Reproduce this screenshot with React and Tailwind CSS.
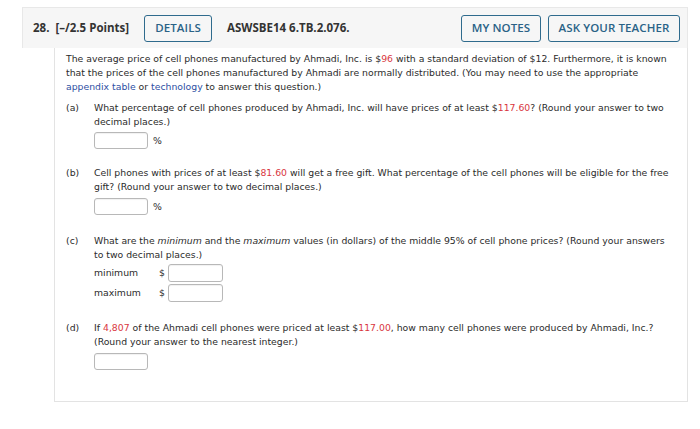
import React from 'react';

const Red = ({ children }) => <span className="text-[#d9363e]">{children}</span>;
const Link = ({ children }) => <span className="text-[#2d4fa3]">{children}</span>;

const AnswerBox = ({ className = '' }) => (
  <span className={`inline-block w-[54px] h-[17px] border border-[#b8b8b8] rounded-[3px] bg-white shadow-[inset_0_1px_1px_rgba(0,0,0,0.06)] ${className}`} />
);

const Part = ({ label, children, className = '' }) => (
  <div className={`flex ${className}`}>
    <div className="w-[28px] shrink-0">({label})</div>
    <div className="flex-1">{children}</div>
  </div>
);

const HeaderButton = ({ children, className = '' }) => (
  <button className={`h-[27px] border-[1.5px] border-[#2f6b8d] rounded-[3px] text-[#2a6286] font-semibold text-[11.5px] tracking-[0.1px] flex items-center justify-center ${className}`}>
    {children}
  </button>
);

export default function App() {
  return (
    <div className="w-[700px] h-[429px] bg-white pt-[7px] pl-[22px] font-[Open_Sans,sans-serif] text-[#333]">
      {/* Header */}
      <div className="w-[666px] h-[41px] bg-[#f6f6f6] border border-b-0 border-[#e8e8e8] flex items-center pl-[10px] pr-[7px]">
        <span className="font-bold text-[11.5px]">28.</span>
        <span className="font-bold text-[11.5px] ml-[6px]">[–/2.5 Points]</span>
        <HeaderButton className="w-[68px] ml-[15px]">DETAILS</HeaderButton>
        <span className="font-bold text-[11.5px] ml-[15px]">ASWSBE14 6.TB.2.076.</span>
        <div className="ml-auto flex gap-[7px]">
          <HeaderButton className="w-[80px]">MY NOTES</HeaderButton>
          <HeaderButton className="w-[132px]">ASK YOUR TEACHER</HeaderButton>
        </div>
      </div>

      {/* Question body */}
      <div className="ml-[32px] w-[634px] h-[354px] border border-t-0 border-[#e3e3e3] pl-[11px] pr-[16px] pt-[4px] font-[DejaVu_Sans,Verdana,sans-serif] text-[9.3px] leading-[14px] text-[#2b2b2b]">
        <p>
          The average price of cell phones manufactured by Ahmadi, Inc. is $<Red>96</Red> with a standard deviation of $12. Furthermore, it is known that the prices of the cell phones manufactured by Ahmadi are normally distributed. (You may need to use the appropriate <Link>appendix table</Link> or <Link>technology</Link> to answer this question.)
        </p>

        <Part label="a" className="mt-[7px]">
          <p>What percentage of cell phones produced by Ahmadi, Inc. will have prices of at least $<Red>117.60</Red>? (Round your answer to two decimal places.)</p>
          <div className="flex items-center mt-[3px]">
            <AnswerBox />
            <span className="ml-[5px]">%</span>
          </div>
        </Part>

        <Part label="b" className="mt-[17px]">
          <p>Cell phones with prices of at least $<Red>81.60</Red> will get a free gift. What percentage of the cell phones will be eligible for the free gift? (Round your answer to two decimal places.)</p>
          <div className="flex items-center mt-[4px]">
            <AnswerBox />
            <span className="ml-[5px]">%</span>
          </div>
        </Part>

        <Part label="c" className="mt-[19px]">
          <p>What are the <i>minimum</i> and the <i>maximum</i> values (in dollars) of the middle 95% of cell phone prices? (Round your answers to two decimal places.)</p>
          <div className="flex items-center mt-[2px]">
            <span className="w-[65px]">minimum</span>
            <span className="w-[9px]">$</span>
            <AnswerBox className="w-[55px] h-[18px]" />
          </div>
          <div className="flex items-center mt-[2px]">
            <span className="w-[65px]">maximum</span>
            <span className="w-[9px]">$</span>
            <AnswerBox className="w-[55px] h-[18px]" />
          </div>
        </Part>

        <Part label="d" className="mt-[19px]">
          <p>If <Red>4,807</Red> of the Ahmadi cell phones were priced at least $<Red>117.00</Red>, how many cell phones were produced by Ahmadi, Inc.? (Round your answer to the nearest integer.)</p>
          <div className="flex items-center mt-[4px]">
            <AnswerBox />
          </div>
        </Part>
      </div>
    </div>
  );
}
